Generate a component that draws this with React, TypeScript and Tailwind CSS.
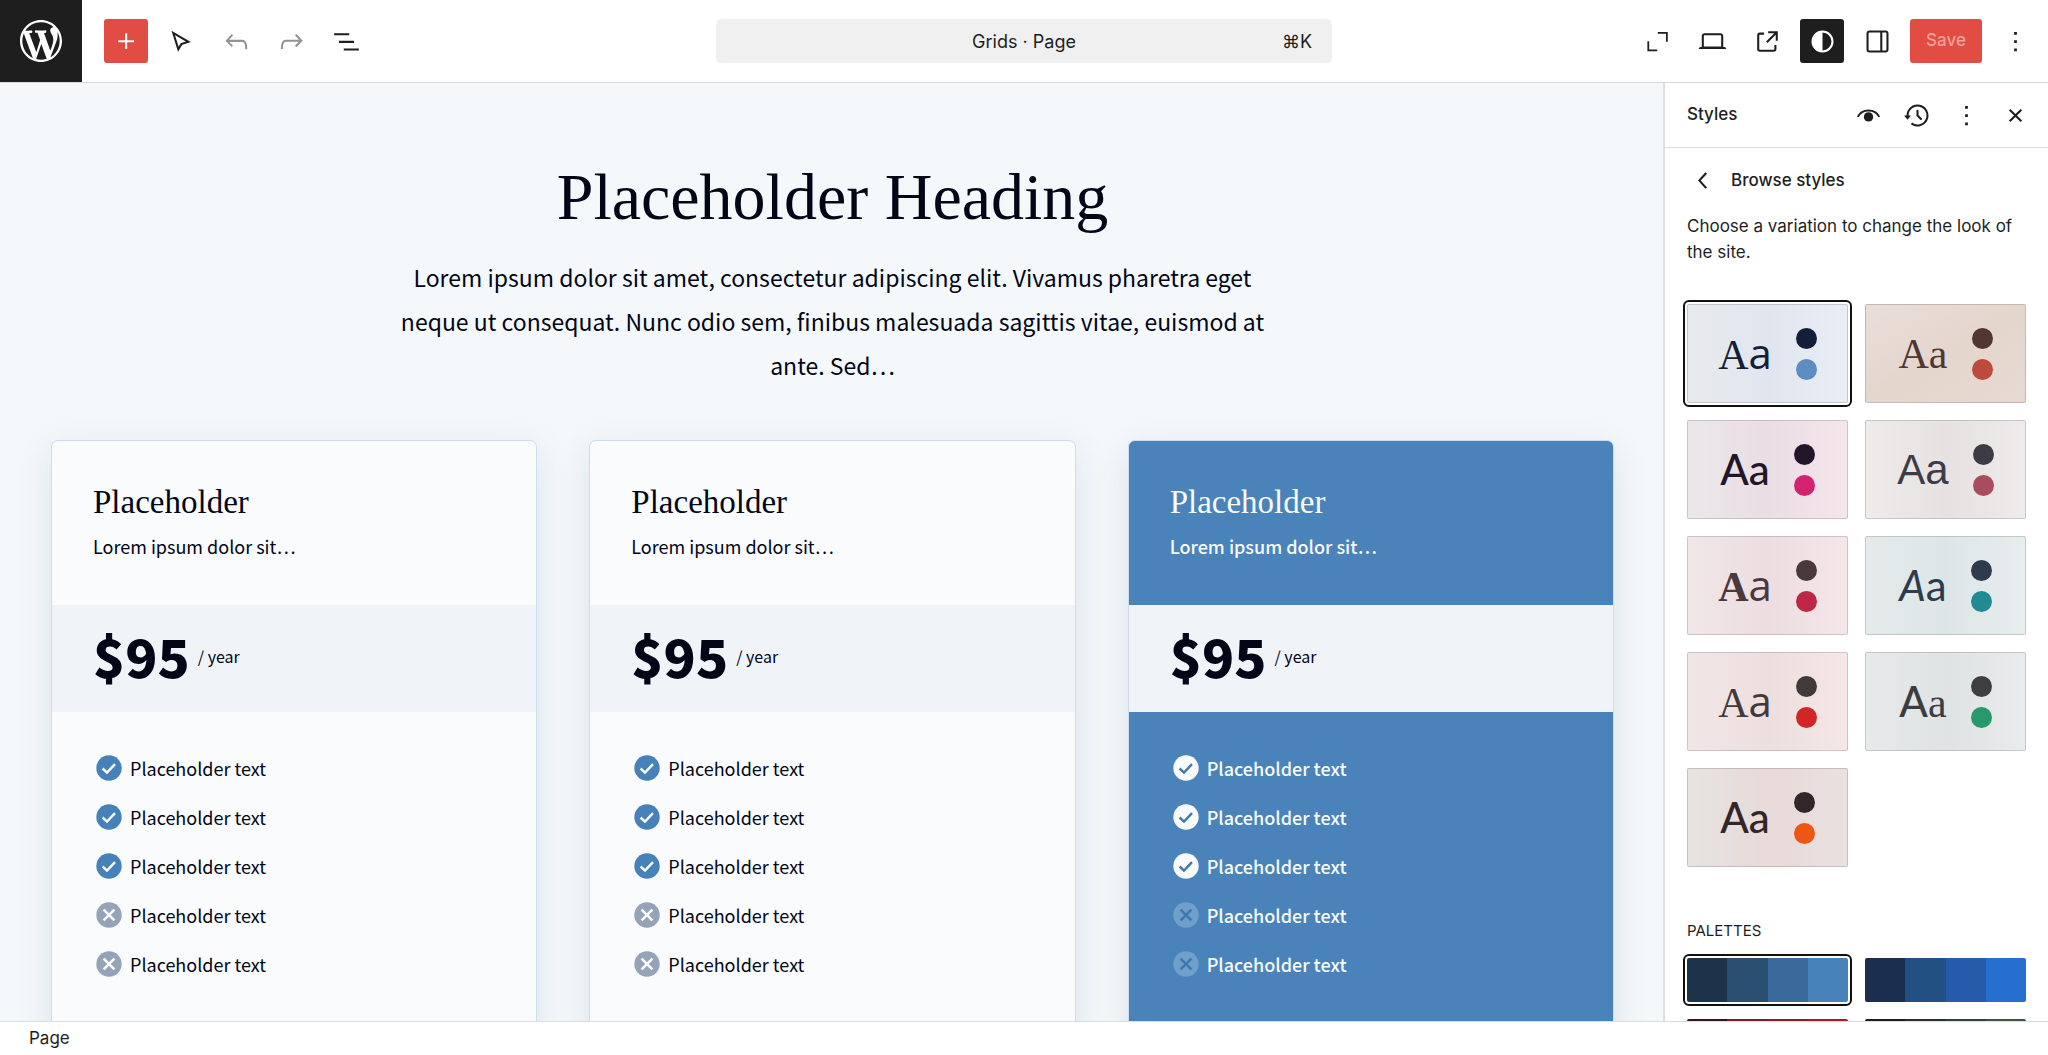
import React from 'react';
import clsx from 'clsx';

type IconProps = { d: string; className?: string };

const Icon: React.FC<IconProps> = ({ d, className }) => (
  <svg viewBox="0 0 24 24" fill="currentColor" fillRule="evenodd" className={clsx('size-[33px]', className)} aria-hidden="true">
    <path d={d} />
  </svg>
);

const icons = {
  plus: 'M11 12.5V17.5H12.5V12.5H17.5V11H12.5V6H11V11H6V12.5H11Z',
  undo: 'M18.3 11.7c-.6-.6-1.4-.9-2.3-.9H6.7l2.9-3.3-1.1-1-4.5 5L8.5 16l1-1-2.7-2.7H16c.5 0 .9.2 1.3.5 1 1 1 3.4 1 4.5v.3h1.5v-.2c0-1.5 0-4.3-1.5-5.7z',
  redo: 'M15.6 6.5l-1.1 1 2.9 3.3H8c-.9 0-1.7.3-2.3.9-1.4 1.5-1.4 4.2-1.4 5.6v.2h1.5v-.3c0-1.1 0-3.5 1-4.5.3-.3.7-.5 1.3-.5h9.2L14.5 15l1.1 1.1 4.6-4.6-4.6-5z',
  listView: 'M3 6h11v1.5H3V6Zm3.5 5.5h11V13h-11v-1.5ZM21 17H10v1.5h11V17Z',
  desktop: 'M20.5 16h-.7V8c0-1.1-.9-2-2-2H6.2c-1.1 0-2 .9-2 2v8h-.7c-.8 0-1.5.7-1.5 1.5h20c0-.8-.7-1.5-1.5-1.5zM5.7 8c0-.3.2-.5.5-.5h11.6c.3 0 .5.2.5.5v7.6H5.7V8z',
  external: 'M19.5 4.5h-7V6h4.44l-5.97 5.97 1.06 1.06L18 7.06v4.44h1.5v-7Zm-13 1a2 2 0 0 0-2 2v10a2 2 0 0 0 2 2h10a2 2 0 0 0 2-2v-3H17v3a.5.5 0 0 1-.5.5h-10a.5.5 0 0 1-.5-.5v-10a.5.5 0 0 1 .5-.5h3V5.5h-3Z',
  styles: 'M20 12a8 8 0 1 1-16 0 8 8 0 0 1 16 0Zm-1.5 0a6.5 6.5 0 0 1-6.5 6.5v-13a6.5 6.5 0 0 1 6.5 6.5Z',
  drawer: 'M18 4H6c-1.1 0-2 .9-2 2v12c0 1.1.9 2 2 2h12c1.1 0 2-.9 2-2V6c0-1.1-.9-2-2-2zm-4 14.5H6c-.3 0-.5-.2-.5-.5V6c0-.3.2-.5.5-.5h8v13zm4.5-.5c0 .3-.2.5-.5.5h-2.5v-13H18c.3 0 .5.2.5.5v12z',
  more: 'M13 19h-2v-2h2v2zm0-6h-2v-2h2v2zm0-6h-2V5h2v2z',
  backup: 'M5.5 12h1.75l-2.5 3-2.5-3H4a8 8 0 113.134 6.35l.907-1.194A6.5 6.5 0 105.5 12zm9.53 1.97l-2.28-2.28V8.5a.75.75 0 00-1.5 0V12a.747.747 0 00.22.53l2.5 2.5a.75.75 0 101.06-1.06z',
  close: 'M12 13.06l3.712 3.713 1.061-1.06L13.061 12l3.712-3.712-1.06-1.06L12 10.938 8.288 7.227l-1.061 1.06L10.939 12l-3.712 3.712 1.06 1.061L12 13.061z',
  chevronLeft: 'M14.6 7l-1.2-1L8 12l5.4 6 1.2-1-4.6-5z',
};

const IconButton: React.FC<{ label: string; className?: string; disabled?: boolean; children: React.ReactNode }> = ({
  label,
  className,
  disabled,
  children,
}) => (
  <button
    type="button"
    aria-label={label}
    disabled={disabled}
    className={clsx('flex size-11 shrink-0 items-center justify-center rounded-[3px]', className)}
  >
    {children}
  </button>
);

const WordPressLogo = () => (
  <svg viewBox="0 0 20 20" fill="currentColor" className="size-[42px]" aria-hidden="true">
    <path d="M20 10c0-5.51-4.49-10-10-10C4.48 0 0 4.49 0 10c0 5.52 4.48 10 10 10 5.51 0 10-4.48 10-10zM7.78 15.37L4.37 6.22c.55-.02 1.17-.08 1.17-.08.5-.06.44-1.13-.06-1.11 0 0-1.45.11-2.37.11-.18 0-.37 0-.58-.01C4.12 2.69 6.87 1.11 10 1.11c2.33 0 4.45.87 6.05 2.34-.68-.11-1.65.39-1.65 1.58 0 .74.45 1.36.9 2.1.35.61.55 1.36.55 2.46 0 1.49-1.4 5-1.4 5l-3.03-8.37c.54-.02.82-.17.82-.17.5-.05.44-1.25-.06-1.22 0 0-1.44.12-2.38.12-.87 0-2.33-.12-2.33-.12-.5-.03-.56 1.2-.06 1.22l.92.08 1.26 3.41zM17.41 10c.24-.64.74-1.87.43-4.25.7 1.29 1.05 2.71 1.05 4.25 0 3.29-1.73 6.24-4.4 7.78.97-2.59 1.94-5.2 2.92-7.78zM6.1 18.09C3.12 16.65 1.11 13.53 1.11 10c0-1.3.23-2.48.72-3.59C3.25 10.3 4.67 14.2 6.1 18.09zm4.03-6.63l2.58 6.98c-.86.29-1.76.45-2.71.45-.79 0-1.57-.11-2.29-.33.81-2.38 1.62-4.74 2.42-7.1z" />
  </svg>
);

const EditorHeader = () => (
  <header className="grid h-[83px] shrink-0 grid-cols-[1fr_616px_1fr] items-center border-b border-[#d8d9db] bg-white">
    <div className="flex items-center gap-[11px]">
      <a href="#dashboard" aria-label="View Pages" className="mr-[11px] flex size-[82px] items-center justify-center bg-[#1e1e1e] text-white">
        <WordPressLogo />
      </a>
      <IconButton label="Block Inserter" className="bg-[#e14d43] text-white">
        <Icon d={icons.plus} />
      </IconButton>
      <IconButton label="Tools">
        <svg viewBox="0 0 24 24" fill="none" stroke="currentColor" strokeWidth="1.5" className="size-[33px]" aria-hidden="true">
          <path d="M6 5.8 9.7 17.6 11.9 13.9 17 12.2Z" />
        </svg>
      </IconButton>
      <IconButton label="Undo" disabled className="text-[#949494]">
        <Icon d={icons.undo} />
      </IconButton>
      <IconButton label="Redo" disabled className="text-[#949494]">
        <Icon d={icons.redo} />
      </IconButton>
      <IconButton label="Document Overview">
        <Icon d={icons.listView} />
      </IconButton>
    </div>

    <button type="button" className="flex h-11 items-center rounded-[5px] bg-[#f0f0f0] px-5 text-[18px]">
      <span className="flex-1 text-left" />
      <span>Grids · Page</span>
      <span className="flex-1 text-right">⌘K</span>
    </button>

    <div className="flex items-center justify-end gap-[11px] pr-[11px]">
      <IconButton label="Zoom Out">
        <svg viewBox="0 0 24 24" fill="none" stroke="currentColor" strokeWidth="1.3" className="size-[33px]" aria-hidden="true">
          <path d="M12.2 5.7h6.6v6.4M5.3 11.9v6.5h6.5" />
        </svg>
      </IconButton>
      <IconButton label="View">
        <Icon d={icons.desktop} />
      </IconButton>
      <IconButton label="View Page">
        <Icon d={icons.external} />
      </IconButton>
      <IconButton label="Styles" className="bg-[#1e1e1e] text-white">
        <Icon d={icons.styles} />
      </IconButton>
      <IconButton label="Settings">
        <Icon d={icons.drawer} />
      </IconButton>
      <button type="button" disabled className="h-11 w-[72px] rounded-[3px] bg-[#e14d43] text-[17px] font-medium text-[#f2a09b]">
        Save
      </button>
      <IconButton label="Options">
        <Icon d={icons.more} />
      </IconButton>
    </div>
  </header>
);

const FeatureIcon: React.FC<{ included: boolean; featured: boolean }> = ({ included, featured }) => (
  <svg
    viewBox="0 0 26 26"
    className={clsx(
      'size-[26px]',
      included && (featured ? 'text-[#f8fafc]' : 'text-[#4682b9]'),
      !included && (featured ? 'text-[#719fcb]' : 'text-[#94a3b8]'),
    )}
    aria-hidden="true"
  >
    <circle cx="13" cy="13" r="12.7" fill="currentColor" />
    <path
      d={included ? 'M6.6 13.5 11 17.6 19 9.2' : 'M7.6 7.6 18.4 18.4M18.4 7.6 7.6 18.4'}
      fill="none"
      strokeWidth={included ? 2.4 : 2.6}
      className={featured ? 'stroke-[#4078ae]' : 'stroke-[#f9fbfd]'}
    />
  </svg>
);

const features = [true, true, true, false, false];

const PricingCard: React.FC<{ featured?: boolean }> = ({ featured = false }) => (
  <article
    className={clsx(
      'h-[760px] overflow-hidden rounded-[7px] border border-[#cfdcf0] shadow-[0_10px_36px_rgba(15,40,70,0.10)]',
      featured ? 'bg-[#4a83b9] text-[#f8fafc]' : 'bg-[#f9fbfd] text-[#020617]',
    )}
  >
    <div className="flex h-[164px] flex-col gap-2 px-[41px] pt-[41px]">
      <h2 className="font-['Liberation_Serif',serif] text-[33px] leading-10">Placeholder</h2>
      <p className={clsx('text-[18px] leading-8', featured && 'font-medium')}>Lorem ipsum dolor sit…</p>
    </div>
    <div className="flex h-[107px] items-center gap-2 bg-[#f0f4f9] px-[41px] pb-[6px] text-[#020617]">
      <strong className="text-[53px] leading-none font-black">$95</strong>
      <span className="text-[16px]">/ year</span>
    </div>
    <ul className="flex flex-col gap-[17px] px-11 pt-10">
      {features.map((included, i) => (
        <li key={i} className="flex h-8 items-center gap-2">
          <FeatureIcon included={included} featured={featured} />
          <span className={clsx('text-[18px] leading-8', featured && 'font-medium')}>Placeholder text</span>
        </li>
      ))}
    </ul>
  </article>
);

const Canvas = () => (
  <main className="min-w-0 flex-1 overflow-hidden bg-[#f4f8fb] pt-[70px] pr-[49px] pl-[51px] font-['Noto_Sans_CJK_SC',sans-serif] text-[#020617]">
    <div className="mx-auto flex max-w-[884px] flex-col gap-[14px] text-center">
      <h1 className="font-['Liberation_Serif',serif] text-[66px] leading-[88px]">Placeholder Heading</h1>
      <p className="text-[23px] leading-11">
        Lorem ipsum dolor sit amet, consectetur adipiscing elit. Vivamus pharetra eget neque ut consequat. Nunc odio sem,
        finibus malesuada sagittis vitae, euismod at ante. Sed…
      </p>
    </div>
    <div className="mt-[53px] grid grid-cols-3 gap-13">
      <PricingCard />
      <PricingCard />
      <PricingCard featured />
    </div>
  </main>
);

const variations = [
  { bg: 'bg-linear-to-r from-[#e8eaed] via-[#e1e6ee] to-[#e9edf5]', text: 'text-[#131f38]', dot: 'bg-[#131f38]', accent: 'bg-[#5d8dc0]', upper: "font-['Liberation_Serif',serif]", lower: "font-['Open_Sans',sans-serif]" },
  { bg: 'bg-linear-to-br from-[#e9dfd9] via-[#e4d6cd] to-[#e8dad2]', text: 'text-[#523731]', dot: 'bg-[#523731]', accent: 'bg-[#bd4b3c]', upper: "font-['Liberation_Serif',serif]", lower: "font-['Liberation_Serif',serif]" },
  { bg: 'bg-linear-to-r from-[#ebe8ea] via-[#eadde4] to-[#f5e6eb]', text: 'text-[#22172a]', dot: 'bg-[#22172a]', accent: 'bg-[#d32370]', upper: "font-['Lato',sans-serif] font-medium", lower: "font-['Lato',sans-serif] font-medium" },
  { bg: 'bg-linear-to-r from-[#eeebeb] via-[#e7e2e1] to-[#efeaeb]', text: 'text-[#3d3c46]', dot: 'bg-[#3d3c46]', accent: 'bg-[#a84d5d]', upper: "font-['Liberation_Sans',sans-serif]", lower: "font-['Liberation_Sans',sans-serif]" },
  { bg: 'bg-linear-to-r from-[#f1e7e8] via-[#ecdde0] to-[#f5e6e9]', text: 'text-[#49383c]', dot: 'bg-[#49383c]', accent: 'bg-[#bd2745]', upper: "font-['Liberation_Serif',serif] font-bold", lower: "font-['Open_Sans',sans-serif]" },
  { bg: 'bg-linear-to-r from-[#e5eaea] via-[#dde6e7] to-[#e8eded]', text: 'text-[#2c3c4d]', dot: 'bg-[#2c3c4d]', accent: 'bg-[#228a92]', upper: "font-['Lato',sans-serif] italic", lower: "font-['Lato',sans-serif]" },
  { bg: 'bg-linear-to-r from-[#f1e6e6] via-[#eedfdf] to-[#f6e7e7]', text: 'text-[#403a3b]', dot: 'bg-[#403a3b]', accent: 'bg-[#d22525]', upper: "font-['Liberation_Serif',serif]", lower: "font-['Open_Sans',sans-serif]" },
  { bg: 'bg-linear-to-r from-[#e8eaea] via-[#dfe3e4] to-[#e9ebec]', text: 'text-[#3c3d3f]', dot: 'bg-[#3f3f41]', accent: 'bg-[#28996d]', upper: "font-['Lato',sans-serif] font-medium", lower: "font-['Liberation_Serif',serif]" },
  { bg: 'bg-linear-to-r from-[#e6e4e2] via-[#e7dad8] to-[#ebe0e1]', text: 'text-[#33262a]', dot: 'bg-[#33262a]', accent: 'bg-[#ee5613]', upper: "font-['Lato',sans-serif] font-medium", lower: "font-['Lato',sans-serif] font-medium" },
];

const palettes = [
  ['bg-[#1d3349]', 'bg-[#2a4f70]', 'bg-[#3a6a9b]', 'bg-[#4882ba]'],
  ['bg-[#1b2e50]', 'bg-[#235083]', 'bg-[#255ba8]', 'bg-[#266ecf]'],
  ['bg-[#33151b]', 'bg-[#75202a]', 'bg-[#8c2025]', 'bg-[#a51e20]'],
  ['bg-[#1b1d22]', 'bg-[#2a3230]', 'bg-[#31443a]', 'bg-[#3f5741]'],
];

const selectedRing = 'outline-2 outline-offset-2 outline-[#111111]';

const StylesSidebar = () => (
  <aside className="w-[385px] shrink-0 overflow-hidden border-l-2 border-[#dddfe2] bg-white">
    <div className="flex h-[65px] items-center justify-between border-b border-[#dddddd] pr-[11px] pl-[22px]">
      <h2 className="text-[17px] font-medium">Styles</h2>
      <div className="flex items-center gap-[5px]">
        <IconButton label="Style Book">
          <svg viewBox="0 0 24 24" fill="none" stroke="currentColor" strokeWidth="1.5" className="size-[33px]" aria-hidden="true">
            <path d="M4.2 13C5.7 10 8.5 8.4 12 8.4S18.3 10 19.8 13" />
            <circle cx="12" cy="13" r="3.4" fill="currentColor" stroke="none" />
          </svg>
        </IconButton>
        <IconButton label="Revisions">
          <Icon d={icons.backup} />
        </IconButton>
        <IconButton label="More">
          <Icon d={icons.more} />
        </IconButton>
        <IconButton label="Close Styles">
          <Icon d={icons.close} />
        </IconButton>
      </div>
    </div>

    <div className="px-[22px]">
      <div className="flex h-[65px] items-center gap-[11px]">
        <button type="button" aria-label="Back" className="flex size-[33px] items-center justify-center">
          <Icon d={icons.chevronLeft} />
        </button>
        <h3 className="text-[17px] font-medium">Browse styles</h3>
      </div>
      <p className="text-[17px] leading-[26px]">Choose a variation to change the look of the site.</p>

      <div className="mt-[39px] grid grid-cols-2 gap-[17px]">
        {variations.map((v, i) => (
          <button
            key={i}
            type="button"
            className={clsx(
              'flex h-[99px] items-center justify-center gap-6 rounded-[2px] border border-black/15',
              v.bg,
              i === 0 && selectedRing,
            )}
          >
            <span className={clsx('text-[42px] leading-none', v.text)}>
              <span className={v.upper}>A</span>
              <span className={v.lower}>a</span>
            </span>
            <span className="flex flex-col gap-[10px]">
              <span className={clsx('size-[21px] rounded-full', v.dot)} />
              <span className={clsx('size-[21px] rounded-full', v.accent)} />
            </span>
          </button>
        ))}
      </div>

      <h3 className="mt-[54px] text-[15px] leading-5 uppercase">Palettes</h3>
      <div className="mt-[17px] grid grid-cols-2 gap-[17px]">
        {palettes.map((colors, i) => (
          <button
            key={i}
            type="button"
            aria-label={`Palette ${i + 1}`}
            className={clsx('grid h-11 grid-cols-4 overflow-hidden rounded-[2px]', i === 0 && selectedRing)}
          >
            {colors.map((color) => (
              <span key={color} className={clsx('h-full', color)} />
            ))}
          </button>
        ))}
      </div>
    </div>
  </aside>
);

const App: React.FC = () => {
  return (
    <div className="flex h-screen flex-col overflow-hidden bg-white font-['Inter',sans-serif] text-[#1e1e1e]">
      <EditorHeader />
      <div className="flex min-h-0 flex-1">
        <Canvas />
        <StylesSidebar />
      </div>
      <footer className="flex h-[34px] shrink-0 items-center border-t border-[#dddddd] px-[29px] text-[17px]">Page</footer>
    </div>
  );
};

export default App;
